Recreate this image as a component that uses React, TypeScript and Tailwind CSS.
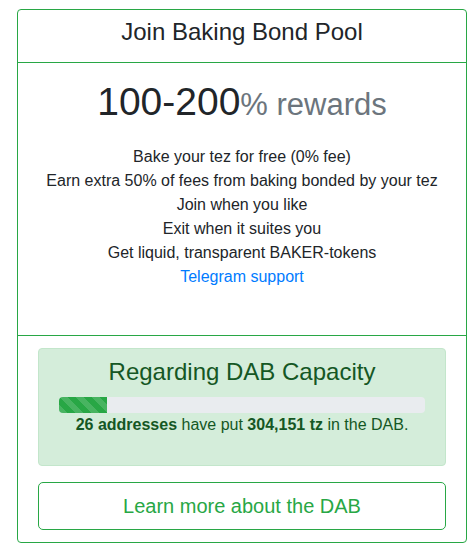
export default function App() {
  return (
    <div
      className="pt-[9px] pl-[17px] bg-white"
      style={{ fontFamily: '"Liberation Sans", Arial, sans-serif' }}
    >
      <div className="w-[450px] border border-[#28a745] rounded-[4px] text-[#212529]">
        <div className="border-b border-[#28a745] pt-[7px] pb-[16px] text-center text-[24px] leading-[29px]">
          Join Baking Bond Pool
        </div>
        <div className="pt-[16px] pb-[46px] text-center">
          <h1 className="h-[46px] text-[39px] leading-[46px] mb-[20px] flex items-baseline justify-center">
            <span>100-200</span>
            <span className="text-[31px] leading-[46px] text-[#6c757d]">% rewards</span>
          </h1>
          <div className="text-[16px] leading-[24px]">
            <div>Bake your tez for free (0% fee)</div>
            <div>Earn extra 50% of fees from baking bonded by your tez</div>
            <div>Join when you like</div>
            <div>Exit when it suites you</div>
            <div>Get liquid, transparent BAKER-tokens</div>
            <div>
              <a href="#" className="text-[#007bff]">
                Telegram support
              </a>
            </div>
          </div>
        </div>
        <div className="border-t border-[#28a745] px-[20px] py-[12px]">
          <div className="border border-[#c3e6cb] bg-[#d4edda] rounded-[4px] px-[20px] pt-[8px] pb-[28px] text-[#155724] text-center mb-[16px]">
            <div className="text-[24px] leading-[29px] mb-[11px]">Regarding DAB Capacity</div>
            <div className="h-[16px] bg-[#e9ecef] rounded-[4px] overflow-hidden flex">
              <div className="w-[13%] h-full bg-[#28a745] bg-[linear-gradient(45deg,rgba(255,255,255,.15)_25%,transparent_25%,transparent_50%,rgba(255,255,255,.15)_50%,rgba(255,255,255,.15)_75%,transparent_75%,transparent)] bg-[length:16px_16px]" />
            </div>
            <div className="text-[16px] leading-[24px]">
              <b>26 addresses</b> have put <b>304,151 tz</b> in the DAB.
            </div>
          </div>
          <div className="border border-[#28a745] rounded-[5px] text-center text-[#28a745] text-[20px] leading-[30px] py-[8px]">
            Learn more about the DAB
          </div>
        </div>
      </div>
    </div>
  );
}
